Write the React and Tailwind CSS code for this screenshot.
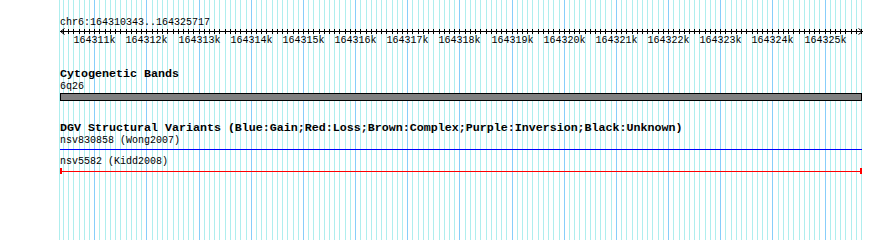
const START = 164310343
const END = 164325717
const LEFT = 60
const WIDTH = 802
const scale = WIDTH / (END - START)

const toX = (pos) => Math.round(LEFT + (pos - START) * scale)

const minorTicks = []
for (let p = Math.ceil(START / 100) * 100; p <= END; p += 100) {
  minorTicks.push(p)
}
const majorTicks = minorTicks.filter((p) => p % 1000 === 0)

function Grid() {
  return (
    <svg
      className="absolute inset-0"
      width="890"
      height="240"
      shapeRendering="crispEdges"
    >
      <rect x="59" y="0" width="1" height="240" fill="#afeeee" />
      {minorTicks.map((p) => (
        <rect
          key={p}
          x={toX(p)}
          y="0"
          width="1"
          height="240"
          fill={p % 1000 === 0 ? '#87cefa' : '#afeeee'}
        />
      ))}
    </svg>
  )
}

function Ruler() {
  return (
    <svg width="890" height="21" shapeRendering="crispEdges" className="block">
      <rect x={LEFT} y="5" width={WIDTH + 1} height="1" fill="#000" />
      {minorTicks.map((p) => (
        <rect key={p} x={toX(p)} y="3" width="1" height="5" fill="#000" />
      ))}
      <path
        d={`M${LEFT + 4.5} 2.5 L${LEFT + 0.5} 5.5 L${LEFT + 4.5} 8.5`}
        stroke="#000"
        fill="none"
        shapeRendering="auto"
      />
      <path
        d={`M${LEFT + WIDTH - 3.5} 2.5 L${LEFT + WIDTH + 0.5} 5.5 L${LEFT + WIDTH - 3.5} 8.5`}
        stroke="#000"
        fill="none"
        shapeRendering="auto"
      />
      {majorTicks.map((p) => (
        <text
          key={p}
          x={toX(p) + 0.5}
          y="17"
          textAnchor="middle"
          fontFamily="'Liberation Mono', monospace"
          fontSize="10"
          fill="#000"
        >
          {Math.round(p / 1000)}k
        </text>
      ))}
    </svg>
  )
}

function App() {
  return (
    <div
      className="relative w-[890px] h-[240px] overflow-hidden bg-white text-black"
      style={{ fontFamily: "'Liberation Mono', 'DejaVu Sans Mono', monospace" }}
    >
      <Grid />

      <div className="relative">
        <div className="pt-[16px] pl-[60px] text-[10px] leading-[13px] whitespace-pre">
          chr6:164310343..164325717
        </div>

        <div className="-mt-[3px]">
          <Ruler />
        </div>

        <div className="mt-[21px] pl-[60px] text-[11.67px] leading-[13px] font-bold whitespace-pre">
          Cytogenetic Bands
        </div>
        <div className="-mt-[1px] pl-[60px] text-[10px] leading-[13px] whitespace-pre">
          6q26
        </div>

        <div className="ml-[60px] w-[802px] h-[8px] mt-[0px] border border-black bg-[#808080]" />

        <div className="mt-[21px] pl-[60px] text-[11.67px] leading-[13px] font-bold whitespace-pre">
          DGV Structural Variants (Blue:Gain;Red:Loss;Brown:Complex;Purple:Inversion;Black:Unknown)
        </div>
        <div className="-mt-[1px] pl-[60px] text-[10px] leading-[13px] whitespace-pre">
          nsv830858 (Wong2007)
        </div>
        <div className="ml-[60px] w-[802px] h-[1px] mt-[2px] bg-[#0000ff]" />

        <div className="mt-[5px] pl-[60px] text-[10px] leading-[13px] whitespace-pre">
          nsv5582 (Kidd2008)
        </div>
        <div className="ml-[60px] w-[802px] h-[6px] mt-[0px] flex items-center">
          <div className="w-[2px] h-[6px] bg-[#ff0000]" />
          <div className="flex-1 h-[1px] bg-[#ff0000]" />
          <div className="w-[2px] h-[6px] bg-[#ff0000]" />
        </div>
      </div>
    </div>
  )
}

export default App
